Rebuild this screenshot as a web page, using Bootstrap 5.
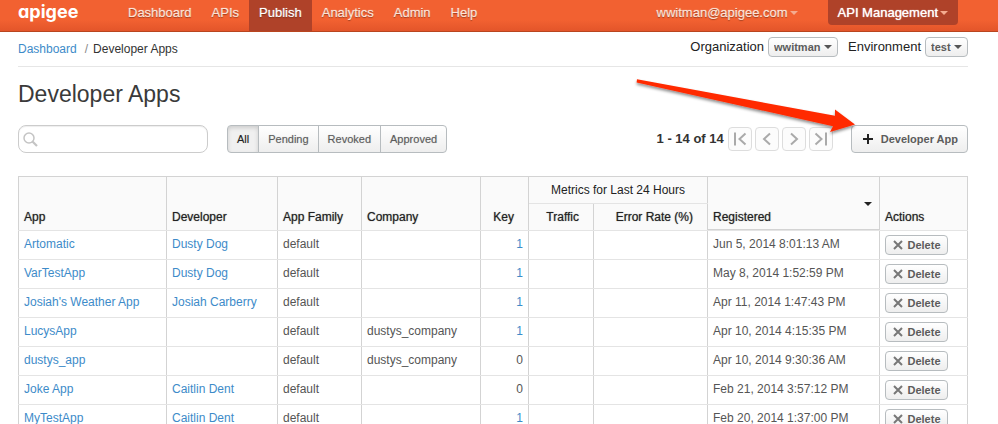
<!DOCTYPE html>
<html lang="en">
<head>
<meta charset="utf-8">
<meta name="viewport" content="width=device-width, initial-scale=1">
<title>Developer Apps</title>
<link href="https://cdn.jsdelivr.net/npm/bootstrap@5.3.0/dist/css/bootstrap.min.css" rel="stylesheet">
<style>
body { font-family: "Liberation Sans", Arial, sans-serif; font-size: 12px; line-height: 18px; color: #333; background: #fff; overflow-x: hidden; }
a { color: #3d8bc9; text-decoration: none; }
.page-pad { padding-left: 18px; padding-right: 30px; }

/* top bar */
.topbar { background: linear-gradient(#f26131 0, #f26131 20px, #e3552a 100%); border-bottom: 1px solid #b9451f; height: 32px; font-size: 13px; }
.brand { font-family: Inter, sans-serif; font-feature-settings: "cv11"; font-weight: 700; font-size: 18px; line-height: 24px; color: #fff; width: 100px; }
.topbar .nav-link { color: #fde3d8; padding: 4px 10px 9px; line-height: 18px; text-shadow: 0 1px 1px #9c3a1a, 0 0 1px #fde3d8; }
.topbar .nav-link.active { background: #af4229; color: #fff; text-shadow: 0 1px 1px #7a2a14, 0 0 1px #fff; }
.topmenu { border: 0; background: none; color: #fde3d8; padding: 4px 10px 3px; gap: 2px; line-height: 18px; text-shadow: 0 1px 1px #9c3a1a, 0 0 1px #fde3d8; }
.topmenu.product { background: #af4229; color: #fff; border-radius: 0 0 4px 4px; margin-left: 20px; margin-right: 10px; text-shadow: 0 0 1px #fff; }
.tri { display: inline-block; border: 4px solid transparent; border-top-color: #f4ab8f; border-bottom: 0; }

/* breadcrumb row */
.crumbs { border-bottom: 1px solid #e6e6e6; padding-top: 4px; padding-bottom: 8px; }
.crumbs .breadcrumb-item + .breadcrumb-item { padding-left: 8px; }
.crumbs .breadcrumb-item + .breadcrumb-item::before { padding-right: 5px; color: #888; }
.crumbs .breadcrumb-item.active { color: #333; }
.crumbs label { font-size: 13px; line-height: 20px; color: #222; }
.crumbs select + label { margin-left: 6px; }
.soft-btn { border: 1px solid #b7bcbf; border-radius: 4px; background: linear-gradient(#fff, #eee); color: #5c5c5c; font-size: 11px; font-weight: 700; line-height: 16px; }
.crumbs select { appearance: none; height: 20px; padding: 0 16px 0 5px; background: url("data:image/svg+xml,%3Csvg xmlns='http://www.w3.org/2000/svg' width='8' height='4'%3E%3Cpath d='M0 0h8l-4 4z' fill='%23555'/%3E%3C/svg%3E") no-repeat right 5px center, linear-gradient(#fff, #eee); }

h1 { font-size: 23px; line-height: 28px; font-weight: 400; color: #3a3a3a; margin: 13px 0 17px; }

/* toolbar */
.search { width: 190px; height: 28px; border: 1px solid #ccc; border-radius: 8px; padding: 0 5px 0 4px; box-shadow: inset 0 1px 1px #eee; }
.search input { border: 0; outline: 0; background: none; min-width: 0; }
.filters { margin-left: 19px; }
.filters .btn { border: 1px solid #b7bcbf; background: linear-gradient(#fff, #eee); color: #5c5c5c; font-size: 11px; line-height: 16px; padding: 5px 9px; border-radius: 4px; text-shadow: 0 0 1px #bbb; }
.filters .btn.active { background: #f0f0f0; color: #222; box-shadow: inset 0 2px 4px #ccc; }
.pager { gap: 3px; }
.pager strong { font-size: 13px; margin-right: 1px; }
.pager button { width: 24px; height: 24px; border: 1px solid #ddd; border-radius: 4px; background: #fcfcfc; padding: 0; }
.add-app { height: 28px; margin-left: 18px; padding: 0 9px 0 10px; gap: 7px; }
.pointer { position: absolute; right: 106px; top: -55px; pointer-events: none; }

/* table */
.apps { table-layout: fixed; width: 100%; margin-top: 23px; border-collapse: collapse; color: #555; }
.apps th, .apps td { border: 1px solid #e4e4e4; border-left-color: #d3d3d3; border-right-color: #d3d3d3; }
.apps td { padding: 4px 5px; vertical-align: top; white-space: nowrap; }
.apps th { background: #fafafa; color: #222; font-weight: 400; vertical-align: bottom; padding: 4px 5px; text-shadow: 0 0 1px #777; }
.apps thead tr:first-child th { border-top-color: #d3d3d3; }
.apps th.group { text-shadow: none; }
.apps th.num { text-align: right; padding-right: 14px; }
.apps th.sorted { box-shadow: inset 0 -1px #d3d3d3; }
.sorted-label { height: 24px; }
.sort-mark { border: 4px solid transparent; border-top-color: #222; border-bottom: 0; margin-right: 2px; }
.delete { height: 20px; width: 63px; padding: 0; gap: 5px; }
</style>
</head>
<body>
<header class="topbar page-pad d-flex align-items-start">
  <a class="brand" href="#">apigee</a>
  <nav class="nav flex-nowrap">
    <a class="nav-link" href="#">Dashboard</a>
    <a class="nav-link" href="#">APIs</a>
    <a class="nav-link active" aria-current="page" href="#">Publish</a>
    <a class="nav-link" href="#">Analytics</a>
    <a class="nav-link" href="#">Admin</a>
    <a class="nav-link" href="#">Help</a>
  </nav>
  <button class="topmenu ms-auto d-flex align-items-center" type="button">wwitman@apigee.com<span class="tri"></span></button>
  <button class="topmenu product d-flex align-items-center" type="button">API Management<span class="tri"></span></button>
</header>

<main class="page-pad">
  <div class="crumbs d-flex justify-content-between">
    <nav aria-label="breadcrumb">
      <ol class="breadcrumb mb-0 pt-1">
        <li class="breadcrumb-item"><a href="#">Dashboard</a></li>
        <li class="breadcrumb-item active" aria-current="page">Developer Apps</li>
      </ol>
    </nav>
    <div class="d-flex align-items-center gap-1">
      <label for="org">Organization</label>
      <select id="org" class="soft-btn"><option>wwitman</option></select>
      <label for="env">Environment</label>
      <select id="env" class="soft-btn"><option>test</option></select>
    </div>
  </div>

  <h1>Developer Apps</h1>

  <div class="d-flex align-items-center position-relative">
    <div class="search d-flex align-items-center">
      <svg width="15" height="15" viewBox="0 0 15 15" fill="none" stroke="#c4c4c4" aria-hidden="true"><circle cx="6" cy="6" r="5" stroke-width="1.5"/><path d="M9.5 9.5 14 14" stroke-width="2.2"/></svg>
      <input class="flex-grow-1" type="text" aria-label="Search apps">
    </div>
    <div class="btn-group filters" role="group" aria-label="Status">
      <button type="button" class="btn active">All</button>
      <button type="button" class="btn">Pending</button>
      <button type="button" class="btn">Revoked</button>
      <button type="button" class="btn">Approved</button>
    </div>
    <div class="pager d-flex align-items-center ms-auto">
      <strong>1 - 14 of 14</strong>
      <button type="button" class="d-flex" aria-label="First page"><svg class="m-auto" width="14" height="14" viewBox="0 0 14 14" fill="none" stroke="#aaa" stroke-width="2"><path d="M2 .5v13M12.5 1.500 6.500 7l6 5.500"/></svg></button>
      <button type="button" class="d-flex" aria-label="Previous page"><svg class="m-auto" width="14" height="14" viewBox="0 0 14 14" fill="none" stroke="#aaa" stroke-width="2"><path d="M10 1.500 4 7l6 5.500"/></svg></button>
      <button type="button" class="d-flex" aria-label="Next page"><svg class="m-auto" width="14" height="14" viewBox="0 0 14 14" fill="none" stroke="#aaa" stroke-width="2"><path d="m4 1.500 6 5.500-6 5.500"/></svg></button>
      <button type="button" class="d-flex" aria-label="Last page"><svg class="m-auto" width="14" height="14" viewBox="0 0 14 14" fill="none" stroke="#aaa" stroke-width="2"><path d="M12 .5v13M1.500 1.500l6 5.500-6 5.500"/></svg></button>
    </div>
    <button type="button" class="soft-btn add-app d-flex align-items-center"><svg width="12" height="12" viewBox="0 0 12 12" stroke="#222" stroke-width="2" aria-hidden="true"><path d="M6 1v10M1 6h10"/></svg>Developer App</button>
    <svg class="pointer" width="232" height="76" viewBox="630 70 232 76" aria-hidden="true">
      <defs><filter id="shade" x="-5%" y="-10%" width="110%" height="140%"><feDropShadow dx="0" dy="2" stdDeviation="1.4" flood-color="#000" flood-opacity=".45"/></filter></defs>
      <path d="M637 79.3 835 115.8 835 109.5 855 124.5 830 132 833 126.3 636.6 82.4z" fill="#ff2a00" filter="url(#shade)"/>
    </svg>
  </div>

  <table class="apps">
    <colgroup><col style="width:148px"><col style="width:111px"><col style="width:84px"><col style="width:119px"><col style="width:48px"><col style="width:65px"><col style="width:114px"><col style="width:172px"><col style="width:88px"></colgroup>
    <thead>
      <tr>
        <th rowspan="2">App</th><th rowspan="2">Developer</th><th rowspan="2">App Family</th><th rowspan="2">Company</th><th rowspan="2" class="num">Key</th>
        <th colspan="2" class="group text-center">Metrics for Last 24 Hours</th>
        <th rowspan="2" class="sorted"><div class="sorted-label d-flex justify-content-between align-items-start"><span class="align-self-end">Registered</span><span class="sort-mark"></span></div></th>
        <th rowspan="2">Actions</th>
      </tr>
      <tr><th class="num">Traffic</th><th class="num">Error Rate (%)</th></tr>
    </thead>
    <tbody>
      <tr><td><a href="#">Artomatic</a></td><td><a href="#">Dusty Dog</a></td><td>default</td><td></td><td class="text-end"><a href="#">1</a></td><td></td><td></td><td>Jun 5, 2014 8:01:13 AM</td><td><button type="button" class="soft-btn delete d-flex align-items-center justify-content-center"><svg width="10" height="10" viewBox="0 0 10 10" stroke="#777" stroke-width="2"><path d="m1 1 8 8M9 1 1 9"/></svg>Delete</button></td></tr>
      <tr><td><a href="#">VarTestApp</a></td><td><a href="#">Dusty Dog</a></td><td>default</td><td></td><td class="text-end"><a href="#">1</a></td><td></td><td></td><td>May 8, 2014 1:52:59 PM</td><td><button type="button" class="soft-btn delete d-flex align-items-center justify-content-center"><svg width="10" height="10" viewBox="0 0 10 10" stroke="#777" stroke-width="2"><path d="m1 1 8 8M9 1 1 9"/></svg>Delete</button></td></tr>
      <tr><td><a href="#">Josiah's Weather App</a></td><td><a href="#">Josiah Carberry</a></td><td>default</td><td></td><td class="text-end"><a href="#">1</a></td><td></td><td></td><td>Apr 11, 2014 1:47:43 PM</td><td><button type="button" class="soft-btn delete d-flex align-items-center justify-content-center"><svg width="10" height="10" viewBox="0 0 10 10" stroke="#777" stroke-width="2"><path d="m1 1 8 8M9 1 1 9"/></svg>Delete</button></td></tr>
      <tr><td><a href="#">LucysApp</a></td><td></td><td>default</td><td>dustys_company</td><td class="text-end"><a href="#">1</a></td><td></td><td></td><td>Apr 10, 2014 4:15:35 PM</td><td><button type="button" class="soft-btn delete d-flex align-items-center justify-content-center"><svg width="10" height="10" viewBox="0 0 10 10" stroke="#777" stroke-width="2"><path d="m1 1 8 8M9 1 1 9"/></svg>Delete</button></td></tr>
      <tr><td><a href="#">dustys_app</a></td><td></td><td>default</td><td>dustys_company</td><td class="text-end">0</td><td></td><td></td><td>Apr 10, 2014 9:30:36 AM</td><td><button type="button" class="soft-btn delete d-flex align-items-center justify-content-center"><svg width="10" height="10" viewBox="0 0 10 10" stroke="#777" stroke-width="2"><path d="m1 1 8 8M9 1 1 9"/></svg>Delete</button></td></tr>
      <tr><td><a href="#">Joke App</a></td><td><a href="#">Caitlin Dent</a></td><td>default</td><td></td><td class="text-end">0</td><td></td><td></td><td>Feb 21, 2014 3:57:12 PM</td><td><button type="button" class="soft-btn delete d-flex align-items-center justify-content-center"><svg width="10" height="10" viewBox="0 0 10 10" stroke="#777" stroke-width="2"><path d="m1 1 8 8M9 1 1 9"/></svg>Delete</button></td></tr>
      <tr><td><a href="#">MyTestApp</a></td><td><a href="#">Caitlin Dent</a></td><td>default</td><td></td><td class="text-end"><a href="#">1</a></td><td></td><td></td><td>Feb 20, 2014 1:37:00 PM</td><td><button type="button" class="soft-btn delete d-flex align-items-center justify-content-center"><svg width="10" height="10" viewBox="0 0 10 10" stroke="#777" stroke-width="2"><path d="m1 1 8 8M9 1 1 9"/></svg>Delete</button></td></tr>
    </tbody>
  </table>
</main>
<script src="https://cdn.jsdelivr.net/npm/bootstrap@5.3.0/dist/js/bootstrap.bundle.min.js"></script>
</body>
</html>
